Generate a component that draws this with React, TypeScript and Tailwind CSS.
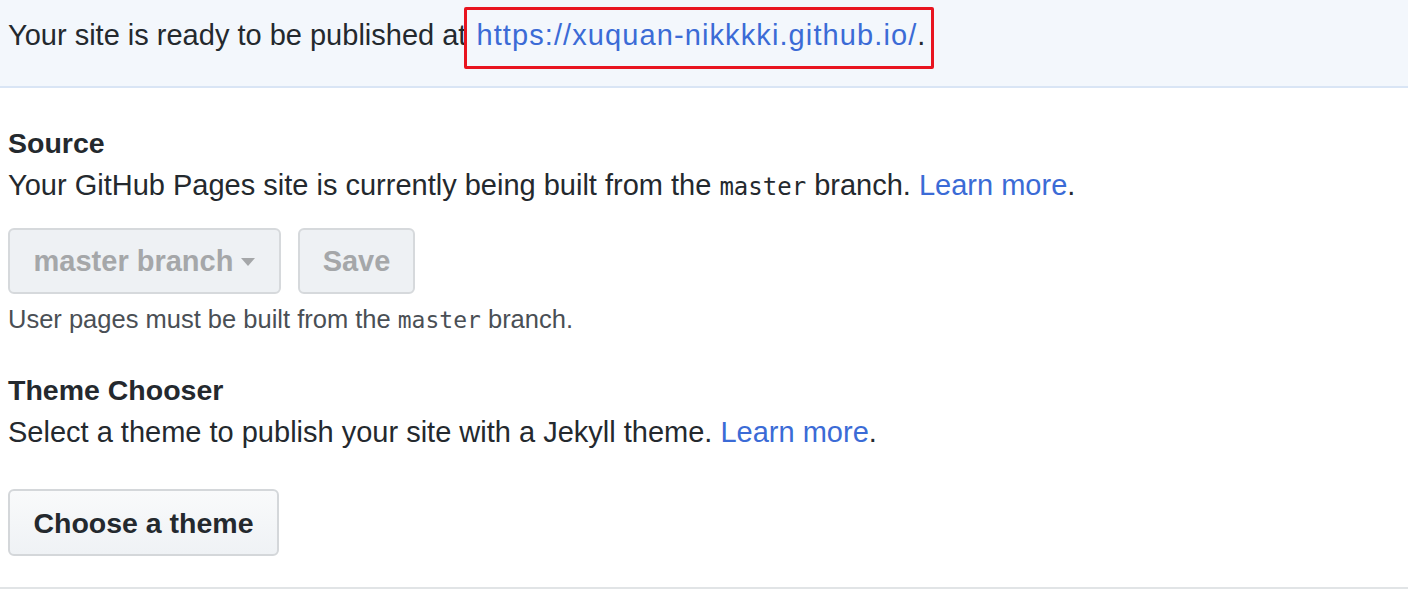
import React from "react";

const sans = { fontFamily: '"Liberation Sans", Arial, sans-serif' };

const Mono: React.FC<{ children: React.ReactNode; className?: string }> = ({ children, className = "" }) => (
  <code className={`font-['DejaVu_Sans_Mono',monospace] ${className}`}>{children}</code>
);

export default function App() {
  return (
    <div className="w-[1408px] h-[592px] bg-white text-[#24292e] overflow-hidden" style={sans}>
      {/* published banner */}
      <div className="h-[88px] bg-[#f3f7fc] border-b-2 border-[#d9e5f5] pl-2 pt-[14px] text-[29px] leading-[42px]">
        <span>Your site is ready to be published at</span>
        <span className="relative ml-[10px]">
          <a className="text-[#3b6bd6] tracking-[1.1px]">https://xuquan-nikkkki.github.io/</a>.
          <span className="absolute -left-[12px] -top-[12px] w-[470px] h-[62px] border-[3px] border-[#e8141f] rounded-[2px]" />
        </span>
      </div>

      <div className="pl-2 pt-[34px] text-[29px] leading-[42px]">
        <h3 className="font-bold text-[28.5px]">Source</h3>
        <p>
          Your GitHub Pages site is currently being built from the <Mono className="text-[24px]">master</Mono> branch.{" "}
          <a className="text-[#3b6bd6]">Learn more</a>.
        </p>

        <div className="mt-5 flex gap-[17px]">
          <button className="h-[66px] w-[273px] rounded-[6px] border-2 border-[#d6d9dc] bg-[#eef1f4] text-[#a5a7a9] font-bold flex items-center justify-center gap-[8px]">
            master branch
            <svg width="14" height="8" viewBox="0 0 14 8" className="mt-[2px]">
              <path d="M0 0h14L7 8z" fill="#a5a7a9" />
            </svg>
          </button>
          <button className="h-[66px] w-[117px] rounded-[6px] border-2 border-[#d6d9dc] bg-[#eef1f4] text-[#a5a7a9] font-bold">
            Save
          </button>
        </div>

        <p className="mt-[6px] text-[25.5px] leading-[38px] text-[#4a4f55]">
          User pages must be built from the <Mono className="text-[23px]">master</Mono> branch.
        </p>

        <h3 className="mt-[30px] font-bold text-[28.5px]">Theme Chooser</h3>
        <p>
          Select a theme to publish your site with a Jekyll theme. <a className="text-[#3b6bd6]">Learn more</a>.
        </p>

        <button className="mt-9 h-[67px] w-[271px] rounded-[6px] border-2 border-[#d4d7da] bg-gradient-to-b from-[#f9fafb] to-[#eff2f5] font-bold text-[28.5px] text-[#24292e]">
          Choose a theme
        </button>
      </div>

      <div className="mt-[31px] h-[2px] bg-[#e1e4e6]" />
    </div>
  );
}
